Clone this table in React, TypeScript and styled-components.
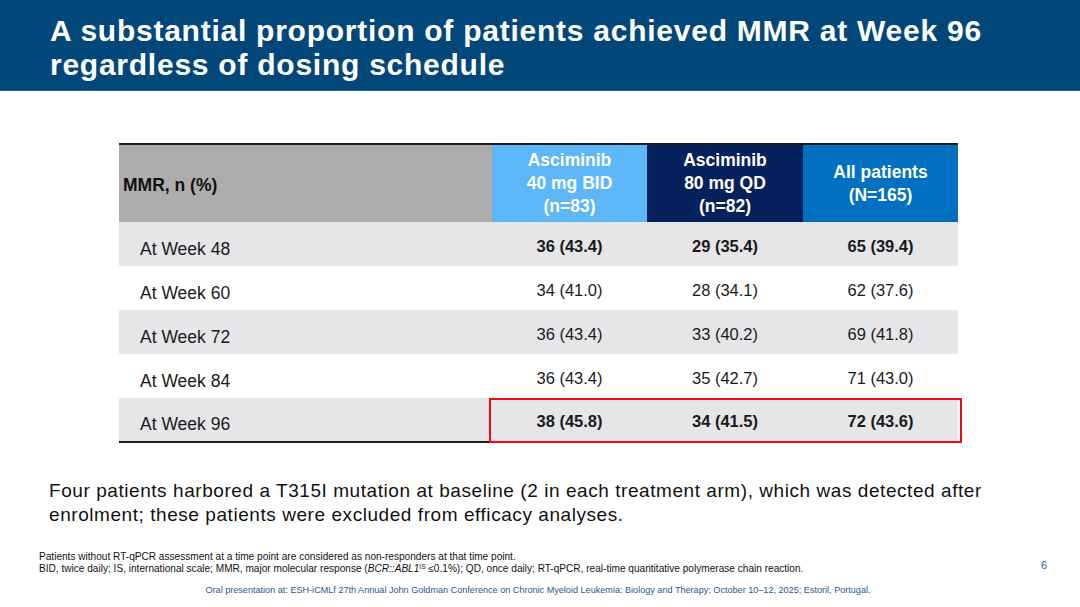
import React from "react";
import styled, { createGlobalStyle } from "styled-components";

const Global = createGlobalStyle`
  html, body { margin: 0; padding: 0; background: #ffffff; }
  body { font-family: "Liberation Sans", Arial, sans-serif; }
`;

const Page = styled.div`
  width: 1080px;
  height: 607px;
  display: flex;
  flex-direction: column;
  background: #ffffff;
  overflow: hidden;
`;

const Header = styled.header`
  height: 91px;
  box-sizing: border-box;
  background: #024779;
  border-bottom: 1px solid #2a6b9a;
  padding: 14px 0 0 50px;
`;

const Title = styled.h1`
  margin: 0;
  color: #ffffff;
  font-size: 30px;
  line-height: 34px;
  font-weight: 700;
  letter-spacing: 0.75px;
  white-space: nowrap;
`;

const TableWrap = styled.div`
  position: relative;
  margin: 52px 0 0 119px;
  width: 839px;
  border-top: 2px solid #1c1c1c;
  border-bottom: 2px solid #1c1c1c;
`;

const cols = "373px 155px 156px 155px";

const HeadRow = styled.div`
  display: grid;
  grid-template-columns: ${cols};
  height: 77px;
`;

const HeadCell = styled.div<{ $bg: string; $dark?: boolean }>`
  background: ${(p) => p.$bg};
  color: ${(p) => (p.$dark ? "#111111" : "#ffffff")};
  display: flex;
  align-items: center;
  justify-content: ${(p) => (p.$dark ? "flex-start" : "center")};
  text-align: center;
  padding-left: ${(p) => (p.$dark ? "4px" : "0")};
  padding-top: ${(p) => (p.$dark ? "3px" : "0")};
  font-size: 17.5px;
  line-height: 23px;
  font-weight: 700;
`;

const Row = styled.div<{ $shaded: boolean; $h: number }>`
  display: grid;
  grid-template-columns: ${cols};
  height: ${(p) => p.$h}px;
  background: ${(p) => (p.$shaded ? "#e6e5e8" : "#ffffff")};
`;

const LabelCell = styled.div`
  display: flex;
  align-items: flex-end;
  padding: 0 0 7px 21px;
  font-size: 17.5px;
  line-height: 20px;
  color: #1a1a1a;
`;

const ValueCell = styled.div<{ $bold: boolean }>`
  display: flex;
  align-items: center;
  justify-content: center;
  padding-top: 4px;
  font-size: 16.5px;
  font-weight: ${(p) => (p.$bold ? 700 : 400)};
  color: #1a1a1a;
`;

const Highlight = styled.div`
  position: absolute;
  left: 370px;
  top: 253px;
  width: 473px;
  height: 45px;
  box-sizing: border-box;
  border: 2px solid #ee0a14;
  pointer-events: none;
`;

const Body = styled.p`
  margin: 36px 0 0 49px;
  font-size: 19px;
  line-height: 24px;
  letter-spacing: 0.56px;
  color: #111111;
  white-space: nowrap;
`;

const FootRow = styled.div`
  margin-top: 24px;
  display: flex;
  justify-content: space-between;
  align-items: center;
  padding: 0 33px 0 39px;
`;

const Notes = styled.div`
  font-size: 10.1px;
  line-height: 12px;
  color: #111111;
  white-space: nowrap;
`;

const PageNum = styled.div`
  font-size: 11px;
  color: #2f6496;
  margin-top: 4px;
`;

const Citation = styled.div`
  margin-top: 9px;
  text-align: center;
  font-size: 9.1px;
  line-height: 12px;
  color: #1f5a8f;
  padding-right: 4px;
  white-space: nowrap;
`;

const Sup = styled.sup`
  font-size: 6.5px;
  vertical-align: 3px;
  line-height: 0;
`;

type RowData = { label: string; v: [string, string, string]; bold: boolean };

const rows: RowData[] = [
  { label: "At Week 48", v: ["36 (43.4)", "29 (35.4)", "65 (39.4)"], bold: true },
  { label: "At Week 60", v: ["34 (41.0)", "28 (34.1)", "62 (37.6)"], bold: false },
  { label: "At Week 72", v: ["36 (43.4)", "33 (40.2)", "69 (41.8)"], bold: false },
  { label: "At Week 84", v: ["36 (43.4)", "35 (42.7)", "71 (43.0)"], bold: false },
  { label: "At Week 96", v: ["38 (45.8)", "34 (41.5)", "72 (43.6)"], bold: true },
];

export default function App() {
  return (
    <Page>
      <Global />
      <Header>
        <Title>
          A substantial proportion of patients achieved MMR at Week 96
          <br />
          regardless of dosing schedule
        </Title>
      </Header>

      <TableWrap>
        <HeadRow>
          <HeadCell $bg="#aeacac" $dark>
            MMR, n (%)
          </HeadCell>
          <HeadCell $bg="#5db7f7">
            Asciminib
            <br />
            40 mg BID
            <br />
            (n=83)
          </HeadCell>
          <HeadCell $bg="#07215c">
            Asciminib
            <br />
            80 mg QD
            <br />
            (n=82)
          </HeadCell>
          <HeadCell $bg="#0270c1">
            All patients
            <br />
            (N=165)
          </HeadCell>
        </HeadRow>
        {rows.map((r, i) => (
          <Row key={r.label} $shaded={i % 2 === 0} $h={i === 4 ? 43 : 44}>
            <LabelCell>{r.label}</LabelCell>
            {r.v.map((v, j) => (
              <ValueCell key={j} $bold={r.bold}>
                {v}
              </ValueCell>
            ))}
          </Row>
        ))}
        <Highlight />
      </TableWrap>

      <Body>
        Four patients harbored a T315I mutation at baseline (2 in each treatment arm), which was detected after
        <br />
        enrolment; these patients were excluded from efficacy analyses.
      </Body>

      <FootRow>
        <Notes>
          Patients without RT-qPCR assessment at a time point are considered as non-responders at that time point.
          <br />
          BID, twice daily; IS, international scale; MMR, major molecular response (<i>BCR::ABL1</i>
          <Sup>IS</Sup> ≤0.1%); QD, once daily; RT-qPCR, real-time quantitative polymerase chain reaction.
        </Notes>
        <PageNum>6</PageNum>
      </FootRow>

      <Citation>
        Oral presentation at: ESH-iCMLf 27th Annual John Goldman Conference on Chronic Myeloid Leukemia: Biology and
        Therapy; October 10–12, 2025; Estoril, Portugal.
      </Citation>
    </Page>
  );
}
